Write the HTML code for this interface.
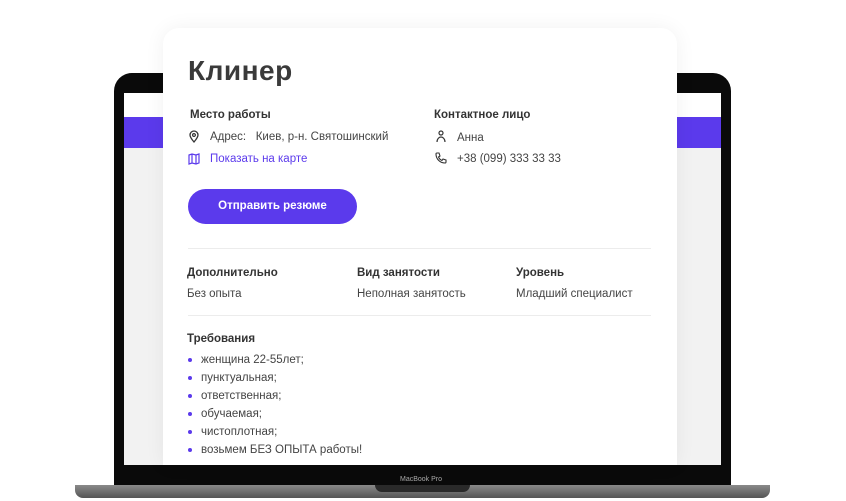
<!DOCTYPE html>
<html><head><meta charset="utf-8"><style>
*{margin:0;padding:0;box-sizing:border-box}
body{width:846px;height:501px;background:#fff;position:relative;overflow:hidden;font-family:"Liberation Sans",sans-serif;color:#333}
.abs{position:absolute}
.lap{left:114px;top:73px;width:617px;height:415px;background:#0a0a0a;border-radius:18px 18px 0 0}
.scr{left:124px;top:93px;width:597px;height:372px;background:#f2f2f2}
.band{left:124px;top:117px;width:597px;height:31px;background:#5b3aec}
.top{left:124px;top:93px;width:597px;height:24px;background:#fff}
.base{left:75px;top:485px;width:695px;height:13px;background:linear-gradient(#8a8a8a,#555);border-radius:0 0 8px 8px}
.notch{left:375px;top:485px;width:95px;height:7px;background:#2a2a2a;border-radius:0 0 8px 8px}
.card{left:163px;top:28px;width:514px;height:437px;background:#fff;border-radius:16px 16px 0 0;box-shadow:0 0 20px rgba(0,0,0,.06)}
h1{position:absolute;left:188px;top:55px;font-size:28px;font-weight:bold;color:#3a3a3a;letter-spacing:.5px}
.h{font-size:11.5px;font-weight:bold;color:#333}
.t{font-size:11.5px;color:#444}
.p{color:#5b3aec}
.btn{left:188px;top:189px;width:169px;height:35px;background:#5b3aec;border-radius:18px;color:#fff;font-size:11.5px;font-weight:bold;text-align:center;line-height:35px}
.hr{left:188px;width:463px;height:1px;background:#ececec}
.li{left:188px;font-size:11.5px;color:#444}
.li:before{content:"";display:inline-block;width:4px;height:4px;border-radius:2px;background:#5b3aec;margin-right:9px;vertical-align:middle}
</style></head><body>
<div class="abs lap"></div>
<div class="abs scr"></div>
<div class="abs top"></div>
<div class="abs band"></div>
<div class="abs base"></div>
<div class="abs notch"></div>
<div class="abs" style="left:400px;top:476px;font-size:7px;color:#aaa">MacBook Pro</div>
<div class="abs card"></div>
<h1>Клинер</h1>
<div class="abs h" style="left:190px;top:109px">Место работы</div>
<div class="abs h" style="left:434px;top:109px">Контактное лицо</div>
<svg class="abs" style="left:188px;top:130px" width="12" height="13" viewBox="0 0 12 13"><path d="M6 12C3 8.5 2 6.5 2 5a4 4 0 0 1 8 0c0 1.5-1 3.5-4 7z" fill="none" stroke="#333" stroke-width="1.3"/><circle cx="6" cy="5" r="1.4" fill="none" stroke="#333" stroke-width="1.2"/></svg>
<div class="abs t" style="left:210px;top:131px">Адрес:&nbsp;&nbsp; Киев, р-н. Святошинский</div>
<svg class="abs" style="left:188px;top:153px" width="12" height="12" viewBox="0 0 12 12"><path d="M1 2l3-1 4 1 3-1v9l-3 1-4-1-3 1z M4 1v9 M8 2v9" fill="none" stroke="#5b3aec" stroke-width="1.2"/></svg>
<div class="abs t p" style="left:210px;top:153px">Показать на карте</div>
<svg class="abs" style="left:435px;top:130px" width="12" height="13" viewBox="0 0 12 13"><circle cx="6" cy="3" r="2" fill="none" stroke="#333" stroke-width="1.2"/><path d="M2 12c0-3 2-5 4-5s4 2 4 5" fill="none" stroke="#333" stroke-width="1.2"/></svg>
<div class="abs t" style="left:457px;top:132px">Анна</div>
<svg class="abs" style="left:435px;top:152px" width="12" height="12" viewBox="0 0 12 12"><path d="M2 1l2 0 1 3-1.5 1c.7 1.6 2 2.9 3.5 3.5L8 7l3 1v2c0 .6-.5 1-1 1C5 11 1 7 1 2c0-.5.4-1 1-1z" fill="none" stroke="#333" stroke-width="1.1"/></svg>
<div class="abs t" style="left:457px;top:153px">+38 (099) 333 33 33</div>
<div class="abs btn">Отправить резюме</div>
<div class="abs hr" style="top:248px"></div>
<div class="abs h" style="left:187px;top:267px">Дополнительно</div>
<div class="abs h" style="left:357px;top:267px">Вид занятости</div>
<div class="abs h" style="left:516px;top:267px">Уровень</div>
<div class="abs t" style="left:187px;top:288px">Без опыта</div>
<div class="abs t" style="left:357px;top:288px">Неполная занятость</div>
<div class="abs t" style="left:516px;top:288px">Младший специалист</div>
<div class="abs hr" style="top:315px"></div>
<div class="abs h" style="left:187px;top:333px">Требования</div>
<div class="abs li" style="top:354px">женщина 22-55лет;</div>
<div class="abs li" style="top:372px">пунктуальная;</div>
<div class="abs li" style="top:390px">ответственная;</div>
<div class="abs li" style="top:408px">обучаемая;</div>
<div class="abs li" style="top:426px">чистоплотная;</div>
<div class="abs li" style="top:444px">возьмем БЕЗ ОПЫТА работы!</div>
</body></html>
